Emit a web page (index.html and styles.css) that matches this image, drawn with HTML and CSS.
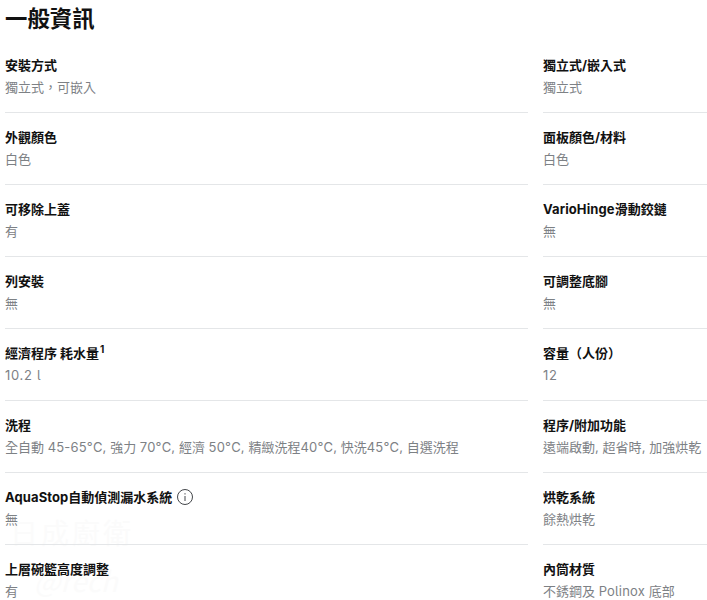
FILE: index.html
```html
<!DOCTYPE html>
<html lang="zh-Hant">
<head>
<meta charset="utf-8">
<title>一般資訊</title>
<link rel="stylesheet" href="styles.css">
</head>
<body>
<main class="page">
  <h2 class="title">一般資訊</h2>
  <div class="watermark" aria-hidden="true"><span class="wm-cn">日成廚衛</span><span class="wm-en">@rech</span></div>
  <div class="specs">
    <div class="row"><div class="label">安裝方式</div><div class="value">獨立式，可嵌入</div></div>
    <div class="row"><div class="label">獨立式/嵌入式</div><div class="value">獨立式</div></div>
    <div class="row"><div class="label">外觀顏色</div><div class="value">白色</div></div>
    <div class="row"><div class="label">面板顏色/材料</div><div class="value">白色</div></div>
    <div class="row"><div class="label">可移除上蓋</div><div class="value">有</div></div>
    <div class="row"><div class="label"><span class="lat">VarioHinge</span>滑動鉸鏈</div><div class="value">無</div></div>
    <div class="row"><div class="label">列安裝</div><div class="value">無</div></div>
    <div class="row"><div class="label">可調整底腳</div><div class="value">無</div></div>
    <div class="row"><div class="label">經濟程序 耗水量<sup class="note">1</sup></div><div class="value"><span class="lat wide">10.2 l</span></div></div>
    <div class="row"><div class="label">容量（人份）</div><div class="value"><span class="lat wide">12</span></div></div>
    <div class="row"><div class="label">洗程</div><div class="value">全自動 <span class="lat">45-65°C,</span> 強力 <span class="lat">70°C,</span> 經濟 <span class="lat">50°C,</span> 精緻洗程<span class="lat">40°C,</span> 快洗<span class="lat">45°C,</span> 自選洗程</div></div>
    <div class="row"><div class="label">程序/附加功能</div><div class="value">遠端啟動<span class="lat">,</span> 超省時<span class="lat">,</span> 加強烘乾</div></div>
    <div class="row"><div class="label"><span class="lat">AquaStop</span>自動偵測漏水系統<svg class="info" viewBox="0 0 16 16" width="16" height="16" aria-hidden="true"><circle cx="8" cy="8" r="7.5" fill="none" stroke="#43464a" stroke-width="1"/><path d="M8 4.2v1.3M8 7v5" fill="none" stroke="#43464a" stroke-width="1"/></svg></div><div class="value">無</div></div>
    <div class="row"><div class="label">烘乾系統</div><div class="value">餘熱烘乾</div></div>
    <div class="row"><div class="label">上層碗籃高度調整</div><div class="value">有</div></div>
    <div class="row"><div class="label">內筒材質</div><div class="value">不銹鋼及 <span class="lat">Polinox</span> 底部</div></div>
  </div>
</main>
</body>
</html>
```

FILE: styles.css
```css
html, body {
  margin: 0;
  padding: 0;
  background: #fff;
  height: 600px;
  overflow: hidden;
}

.page {
  position: relative;
  padding-left: 5px;
  font-family: Inter, "Noto Sans CJK TC", sans-serif;
  color: #111;
}

.title {
  margin: 0;
  height: 41px;
  font-size: 22.4px;
  line-height: 38px;
  font-weight: 700;
}

.specs {
  position: relative;
  display: grid;
  grid-template-columns: 523px 164px;
  column-gap: 15px;
}

.row {
  height: 72px;
  box-sizing: border-box;
  padding-top: 12px;
  border-bottom: 1px solid #e4e6e8;
}

.label {
  display: flex;
  align-items: center;
  height: 24px;
  font-size: 13px;
  line-height: 24px;
  font-weight: 700;
  white-space: pre;
}

.lat {
  letter-spacing: 0.18px;
  font-feature-settings: "cv05";
}

.label .lat {
  letter-spacing: 0.1px;
}

.lat.wide {
  letter-spacing: 0.7px;
}

.note {
  font-size: 10px;
  line-height: 1;
  align-self: flex-start;
  margin: 3px 0 0 1px;
}

.value {
  font-size: 13px;
  line-height: 22px;
  margin-top: -1px;
  color: #7d8185;
  white-space: nowrap;
}

.info {
  margin-left: 5px;
  flex: none;
}

.watermark {
  position: absolute;
  left: 10px;
  top: 512px;
  color: #fbfbfb;
  display: flex;
  flex-direction: column;
  font-family: "Noto Sans CJK TC", sans-serif;
}

.wm-cn {
  font-size: 28px;
  letter-spacing: 3px;
  line-height: 40px;
}

.wm-en {
  font-size: 28px;
  font-style: italic;
  margin-top: 11px;
  padding-left: 24px;
  line-height: 34px;
}
```
